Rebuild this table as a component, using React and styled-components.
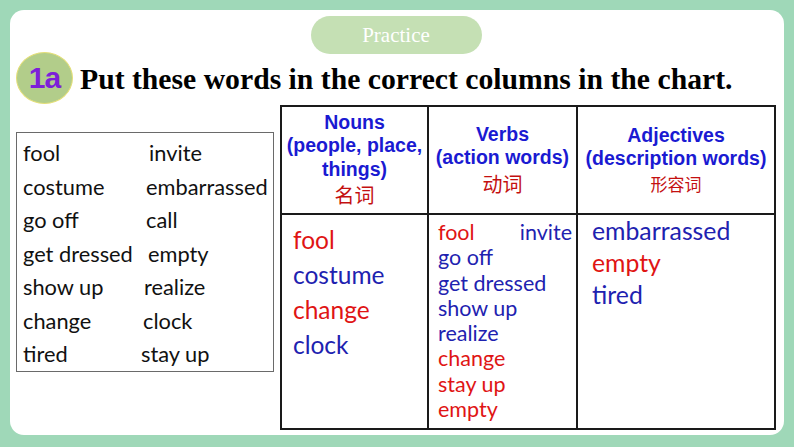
import React from "react";
import styled, { createGlobalStyle } from "styled-components";

const GlobalStyle = createGlobalStyle`
  html, body {
    margin: 0;
    padding: 0;
    background: #9fd8b8;
  }
  * {
    box-sizing: border-box;
  }
`;

const wordPairs = [
  ["fool", "invite", 8],
  ["costume", "embarrassed", 5],
  ["go off", "call", 5],
  ["get dressed", "empty", 7],
  ["show up", "realize", 3],
  ["change", "clock", 2],
  ["tired", "stay up", 0],
];

const nouns = [
  ["fool", "red"],
  ["costume", "blue"],
  ["change", "red"],
  ["clock", "blue"],
];

const verbs = [
  ["go off", "blue"],
  ["get dressed", "blue"],
  ["show up", "blue"],
  ["realize", "blue"],
  ["change", "red"],
  ["stay up", "red"],
  ["empty", "red"],
];

const adjectives = [
  ["embarrassed", "blue"],
  ["empty", "red"],
  ["tired", "blue"],
];

const App = () => {
  return (
    <>
      <GlobalStyle />
      <StyledSlide>
        <StyledPanel>
          <StyledPill>Practice</StyledPill>
          <StyledTitleRow>
            <StyledBadge>1a</StyledBadge>
            <StyledTitle>Put these words in the correct columns in the chart.</StyledTitle>
          </StyledTitleRow>
          <StyledContent>
            <StyledWordBox>
              {wordPairs.map(([left, right, shift]) => (
                <React.Fragment key={left}>
                  <StyledWord>{left}</StyledWord>
                  <StyledWord $shift={shift}>{right}</StyledWord>
                </React.Fragment>
              ))}
            </StyledWordBox>
            <StyledChart>
              <colgroup>
                <col style={{ width: 147 }} />
                <col style={{ width: 149 }} />
                <col />
              </colgroup>
              <thead>
                <tr>
                  <StyledHead>
                    Nouns
                    <br />
                    (people, place,
                    <br />
                    things)
                    <StyledChinese $big>名词</StyledChinese>
                  </StyledHead>
                  <StyledHead>
                    Verbs
                    <br />
                    (action words)
                    <StyledChinese $big>动词</StyledChinese>
                  </StyledHead>
                  <StyledHead>
                    Adjectives
                    <br />
                    (description words)
                    <StyledChinese>形容词</StyledChinese>
                  </StyledHead>
                </tr>
              </thead>
              <tbody>
                <tr>
                  <StyledCell $pad="7px 0 0 11px">
                    {nouns.map(([word, tone]) => (
                      <StyledAnswer key={word} $tone={tone} $size={24.5} $line={35}>
                        {word}
                      </StyledAnswer>
                    ))}
                  </StyledCell>
                  <StyledCell $pad="5px 4px 0 9px">
                    <StyledSplitLine>
                      <StyledAnswer $tone="red" $size={21.5} $line={25.3}>
                        fool
                      </StyledAnswer>
                      <StyledAnswer $tone="blue" $size={21.5} $line={25.3}>
                        invite
                      </StyledAnswer>
                    </StyledSplitLine>
                    {verbs.map(([word, tone]) => (
                      <StyledAnswer key={word} $tone={tone} $size={21.5} $line={25.3}>
                        {word}
                      </StyledAnswer>
                    ))}
                  </StyledCell>
                  <StyledCell $pad="0 0 0 14px">
                    {adjectives.map(([word, tone]) => (
                      <StyledAnswer key={word} $tone={tone} $size={24.8} $line={32}>
                        {word}
                      </StyledAnswer>
                    ))}
                  </StyledCell>
                </tr>
              </tbody>
            </StyledChart>
          </StyledContent>
        </StyledPanel>
      </StyledSlide>
    </>
  );
};

export default App;

const StyledSlide = styled.div`
  width: 794px;
  height: 447px;
  padding: 10px 10px 12px 10px;
  background: #9fd8b8;
`;

const StyledPanel = styled.div`
  height: 100%;
  background: #ffffff;
  border-radius: 14px;
  padding: 6px 8px 0 6px;
  display: flex;
  flex-direction: column;
`;

const StyledPill = styled.div`
  align-self: center;
  width: 171px;
  height: 38px;
  border-radius: 19px;
  background: #c5e0b4;
  color: #ffffff;
  font-family: "Liberation Serif", "Times New Roman", serif;
  font-size: 21px;
  display: flex;
  align-items: center;
  justify-content: center;
`;

const StyledTitleRow = styled.div`
  display: flex;
  align-items: center;
  gap: 7px;
  margin-top: -4px;
  height: 56px;
`;

const StyledBadge = styled.div`
  width: 57px;
  height: 52px;
  border-radius: 50%;
  background: #b2cd8a;
  border: 1.5px solid #e4df78;
  color: #7d1fd8;
  font-family: "Liberation Sans", Arial, sans-serif;
  font-weight: bold;
  font-size: 30px;
  letter-spacing: -1px;
  display: flex;
  align-items: center;
  justify-content: center;
  flex-shrink: 0;
`;

const StyledTitle = styled.h1`
  margin: 0;
  font-family: "Liberation Serif", "Times New Roman", serif;
  font-weight: bold;
  font-size: 29.7px;
  color: #000000;
  white-space: nowrap;
  padding-top: 2px;
`;

const StyledContent = styled.div`
  display: flex;
  align-items: flex-start;
  gap: 6px;
  margin-top: -1px;
`;

const StyledWordBox = styled.div`
  margin-top: 27px;
  width: 258px;
  height: 240px;
  border: 1px solid #6a6a6a;
  padding: 3px 0 0 6px;
  display: grid;
  grid-template-columns: 118px 1fr;
  grid-auto-rows: 33.5px;
  align-items: center;
`;

const StyledWord = styled.span`
  font-family: Lato, "Open Sans", sans-serif;
  font-size: 21.8px;
  color: #111111;
  white-space: nowrap;
  padding-left: ${(p) => p.$shift || 0}px;
`;

const StyledChart = styled.table`
  width: 496px;
  border-collapse: collapse;
  border: 2px solid #1a1a1a;
  table-layout: fixed;
`;

const StyledHead = styled.th`
  height: 108px;
  border: 2px solid #1a1a1a;
  padding: 0;
  text-align: center;
  vertical-align: middle;
  font-family: "Liberation Sans", Arial, sans-serif;
  font-weight: bold;
  font-size: 19.5px;
  line-height: 23.5px;
  color: #1a1ad2;
`;

const StyledChinese = styled.span`
  display: block;
  font-family: "Noto Sans CJK SC", sans-serif;
  font-weight: normal;
  font-size: ${(p) => (p.$big ? 20 : 17)}px;
  line-height: ${(p) => (p.$big ? 28 : 26)}px;
  color: #c41010;
`;

const StyledCell = styled.td`
  height: 215px;
  border: 2px solid #1a1a1a;
  vertical-align: top;
  padding: ${(p) => p.$pad};
`;

const StyledSplitLine = styled.div`
  display: flex;
  justify-content: space-between;
`;

const StyledAnswer = styled.div`
  font-family: Lato, "Open Sans", sans-serif;
  font-size: ${(p) => p.$size}px;
  line-height: ${(p) => p.$line}px;
  color: ${(p) => (p.$tone === "red" ? "#e01414" : "#1e22b0")};
  white-space: nowrap;
`;
